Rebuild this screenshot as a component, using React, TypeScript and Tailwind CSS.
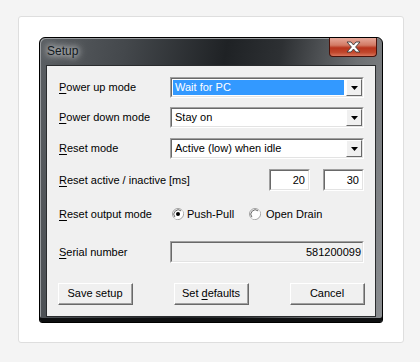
const font = "font-['Liberation_Sans',Arial,sans-serif]";

const sunken =
  "border-t border-l border-t-[#a0a0a0] border-l-[#a0a0a0] border-b border-r border-b-white border-r-white";

const Underlined = ({ text, index = 0 }: { text: string; index?: number }) => (
  <span>
    {text.slice(0, index)}
    <span className="underline underline-offset-[2px]">{text[index]}</span>
    {text.slice(index + 1)}
  </span>
);

const ComboBox = ({ value, selected }: { value: string; selected?: boolean }) => (
  <div className={`w-[194px] h-[21px] ${sunken}`}>
    <div className="flex h-full border-t border-l border-[#696969] border-b border-r border-b-[#e3e3e3] border-r-[#e3e3e3] bg-white">
      <div className="flex-1 flex items-center p-[1px] pr-[2px]">
        <div
          className={`h-full w-full flex items-center pl-[2px] ${
            selected ? "bg-[#3399ff] text-white" : "text-black"
          }`}
        >
          {value}
        </div>
      </div>
      <div className="w-[16px] h-full bg-[#f0f0f0] border-t border-l border-white border-b border-r border-b-[#696969] border-r-[#696969] flex items-center justify-center">
        <svg width="7" height="4" viewBox="0 0 7 4">
          <path d="M0 0h7L3.5 4z" fill="#000" />
        </svg>
      </div>
    </div>
  </div>
);

const NumberBox = ({ value }: { value: string }) => (
  <div className={`w-[41px] h-[22px] ${sunken}`}>
    <div className="h-full border-t border-l border-[#696969] border-b border-r border-b-[#e3e3e3] border-r-[#e3e3e3] bg-white flex items-center justify-end pr-[3px]">
      {value}
    </div>
  </div>
);

const Radio = ({ checked }: { checked?: boolean }) => (
  <svg width="12" height="12" viewBox="0 0 12 12">
    <circle cx="6" cy="6" r="5.5" fill="#fff" stroke="#a0a0a0" />
    <path d="M2.2 9.8A5.5 5.5 0 0 0 9.8 2.2" fill="none" stroke="#fff" />
    <path d="M2.9 9.1A4.4 4.4 0 0 1 9.1 2.9" fill="none" stroke="#696969" />
    {checked && <circle cx="6" cy="6" r="2" fill="#000" />}
  </svg>
);

const Button = ({ children }: { children: React.ReactNode }) => (
  <div className="w-[75px] h-[22px] border-t border-l border-white border-b border-r border-b-[#696969] border-r-[#696969]">
    <div className="h-full flex items-center justify-center bg-[#f0f0f0] border-b border-r border-[#a0a0a0] text-black">
      {children}
    </div>
  </div>
);

const Row = ({ label, children, className = "" }: { label: React.ReactNode; children: React.ReactNode; className?: string }) => (
  <div className={`flex items-center pl-[12px] ${className}`}>
    <div className="w-[111px] shrink-0">{label}</div>
    {children}
  </div>
);

export default function App() {
  return (
    <div className="w-[420px] h-[362px] bg-[#f4f4f4] pt-[16px] pl-[18px]">
      <div className="w-[386px] h-[327px] bg-white border border-[#dedede] rounded-[3px] pt-[20px] pl-[20px]">
        <div className="w-[344px] h-[286px] flex flex-col border border-black rounded-t-[6px] rounded-b-[3px] bg-[linear-gradient(100deg,#5b5f63_0%,#44484c_22%,#1f2225_48%,#2d3033_62%,#6d7073_82%,#8a8d90_100%)] shadow-[inset_0_-4px_0_#0e0f10,inset_1px_1px_0_#9a9da0]">
          <div className="h-[27px] flex items-start justify-between pl-[7px] pr-[5px]">
            <div className="mt-[6px] text-[12px] leading-[14px] text-[#111820] font-['Liberation_Sans',Arial,sans-serif] [text-shadow:0_0_6px_#fff,0_0_10px_#ddd]">
              Setup
            </div>
            <div className="w-[48px] h-[19px] border border-[#4a120a] border-t-0 rounded-b-[4px] bg-[linear-gradient(180deg,#e7a99a_0%,#d27a64_40%,#b8341c_55%,#c1472c_80%,#d9745c_100%)] flex items-center justify-center">
              <svg width="15" height="12" viewBox="0 0 15 12">
                <path
                  d="M1 1h4L7.5 4 10 1h4L9.6 6 14 11h-4L7.5 8 5 11H1l4.4-5z"
                  fill="#fff"
                  stroke="#3b3b3b"
                  strokeWidth="0.9"
                />
              </svg>
            </div>
          </div>
          <div className={`mx-[6px] mb-[5px] flex-1 border border-[#2a2c2e] bg-[#f0f0f0] text-[11px] text-black ${font}`}>
            <div className="flex flex-col pt-[11px]">
              <Row label={<Underlined text="Power up mode" />}>
                <ComboBox value="Wait for PC" selected />
              </Row>
              <Row className="mt-[9px]" label={<Underlined text="Power down mode" />}>
                <ComboBox value="Stay on" />
              </Row>
              <Row className="mt-[10px]" label={<Underlined text="Reset mode" />}>
                <ComboBox value="Active (low) when idle" />
              </Row>
              <Row className="mt-[10px]" label={<span className="whitespace-nowrap"><Underlined text="Reset active / inactive [ms]" /></span>}>
                <div className="flex-1 flex justify-end gap-[13px] pr-[11px]">
                  <NumberBox value="20" />
                  <NumberBox value="30" />
                </div>
              </Row>
              <Row className="mt-[13px] h-[20px]" label={<Underlined text="Reset output mode" />}>
                <div className="flex items-center pl-[2px]">
                  <Radio checked />
                  <span className="ml-[3px] w-[62px]">Push-Pull</span>
                  <Radio />
                  <span className="ml-[5px]">Open Drain</span>
                </div>
              </Row>
              <Row className="mt-[17px]" label={<Underlined text="Serial number" />}>
                <div className={`w-[194px] h-[22px] ${sunken}`}>
                  <div className="h-full border-t border-l border-[#696969] border-b border-r border-b-[#e3e3e3] border-r-[#e3e3e3] bg-[#f0f0f0] flex items-center justify-end pr-[1px]">
                    581200099
                  </div>
                </div>
              </Row>
              <div className="mt-[20px] flex justify-between pl-[11px] pr-[10px]">
                <Button>Save setup</Button>
                <Button>
                  <span>
                    Set <span className="underline underline-offset-[2px]">d</span>efaults
                  </span>
                </Button>
                <Button>Cancel</Button>
              </div>
            </div>
          </div>
        </div>
      </div>
    </div>
  );
}
